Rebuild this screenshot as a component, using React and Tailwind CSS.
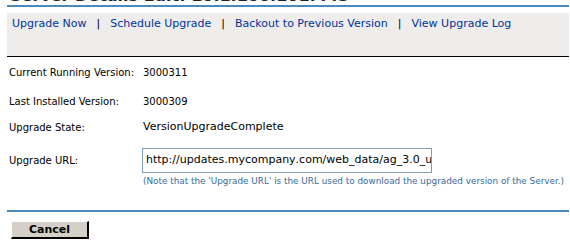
export default function App() {
  const links = ["Upgrade Now", "Schedule Upgrade", "Backout to Previous Version", "View Upgrade Log"];

  const rows = [
    { label: "Current Running Version:", value: "3000311", cls: "mt-[7px] text-[10px]" },
    { label: "Last Installed Version:", value: "3000309", cls: "mt-[13px] text-[10px]" },
    { label: "Upgrade State:", value: "VersionUpgradeComplete", cls: "mt-[10px] text-[11px]" },
  ];

  return (
    <div className="w-[570px] h-[248px] overflow-hidden bg-white font-['DejaVu_Sans',Verdana,sans-serif] text-black">
      <div className="ml-[7px] w-[562px]">
        {/* page title, mostly scrolled off the top */}
        <h1 className="-mt-[12px] pl-[3px] text-[16px] leading-[16px] font-bold whitespace-nowrap text-[#222]">
          Server Details Edit: 10.1.100.101:443
        </h1>
        <div className="mt-[1px] h-[2px] bg-[#4a89bd]" />

        {/* action bar */}
        <div className="mt-[6px] h-[44px] bg-[#eeedeb] border-b border-black pl-[5px] pt-[4px]">
          <div className="flex items-center text-[11px] leading-[14px]">
            {links.map((l, i) => (
              <div key={l} className="flex items-center">
                {i > 0 && <span className="mx-[10px] text-black">|</span>}
                <a className="text-[#003399] cursor-pointer">{l}</a>
              </div>
            ))}
          </div>
        </div>

        {/* details */}
        <div className="flex flex-col pl-[2px]">
          {rows.map((r) => (
            <div key={r.label} className={`grid grid-cols-[134px_1fr] items-center h-[16px] ${r.cls}`}>
              <span className="text-[10px]">{r.label}</span>
              <span>{r.value}</span>
            </div>
          ))}

          <div className="mt-[13px] grid grid-cols-[133px_1fr] items-center h-[25px]">
            <span className="text-[10px]">Upgrade URL:</span>
            <div className="w-[290px] h-[25px] border border-[#7f9db9] bg-white px-[3px] flex items-center overflow-hidden whitespace-nowrap text-[11px]">
              <span>http://updates.mycompany</span>
              <span className="inline-block w-px h-[15px] bg-black" />
              <span>.com/web_data/ag_3.0_update.zip</span>
            </div>
          </div>

          <div className="mt-[3px] pl-[134px] h-[12px] flex items-center text-[8.85px] text-[#3a6a9a] whitespace-nowrap">
            (Note that the 'Upgrade URL' is the URL used to download the upgraded version of the Server.)
          </div>
        </div>

        <div className="mt-[22px] h-[2px] bg-[#4a89bd]" />

        <div className="mt-[9px] pl-[4px] flex">
          <button className="w-[78px] h-[18px] bg-[#d4d0c8] border-t border-l border-t-white border-l-white border-b-2 border-r-2 border-b-black border-r-black text-[11px] font-bold leading-none">
            Cancel
          </button>
        </div>
      </div>
    </div>
  );
}
